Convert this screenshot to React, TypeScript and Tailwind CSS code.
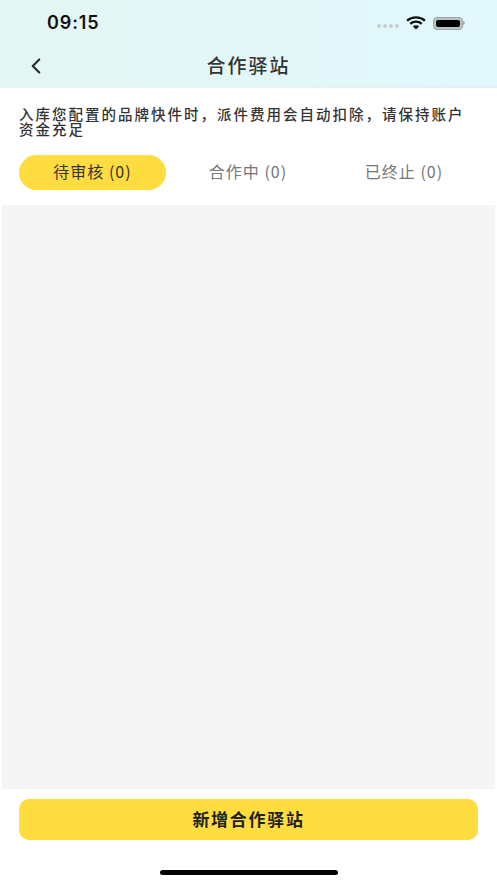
import React from 'react';
import { ChevronLeft } from 'lucide-react';

const cjk = { fontFamily: '"Noto Sans CJK SC", "Liberation Sans", sans-serif' };

function StatusIcons() {
  return (
    <div className="flex items-center">
      <div className="flex gap-[2px] mr-[7px] mt-[6px]">
        <span className="w-[4px] h-[4px] rounded-full bg-[#c4ced0]" />
        <span className="w-[4px] h-[4px] rounded-full bg-[#c4ced0]" />
        <span className="w-[4px] h-[4px] rounded-full bg-[#c4ced0]" />
        <span className="w-[4px] h-[4px] rounded-full bg-[#c4ced0]" />
      </div>
      <svg width="20" height="14" viewBox="0 0 20 14" className="mr-[7px]">
        <path d="M1 4.6C6 .2 14 .2 19 4.6" fill="none" stroke="#111" strokeWidth="2.2" />
        <path d="M4.2 7.8c3.3-2.8 8.3-2.8 11.6 0" fill="none" stroke="#111" strokeWidth="2.2" />
        <path d="M6.8 10.2c1.9-1.4 4.5-1.4 6.4 0L10 13.6z" fill="#111" />
      </svg>
      <div className="flex items-center">
        <div className="w-[30px] h-[13px] rounded-[4px] border border-[#9aa5a6] bg-[#b9c4c5] p-[2px]">
          <div className="w-full h-full rounded-[2px] bg-black" />
        </div>
        <span className="w-[2px] h-[4px] rounded-r-full bg-[#a5b0b1]" />
      </div>
    </div>
  );
}

export default function App() {
  return (
    <div className="w-[497px] h-[883px] bg-white flex flex-col overflow-hidden" style={cjk}>
      <div className="h-[88px] shrink-0 bg-gradient-to-r from-[#e4f6f3] to-[#e2f8fd] border-b border-[#e8f0ef]">
        <div className="h-[46px] pl-[47px] pr-[32px] pt-[12px] flex items-start justify-between">
          <span className="text-[18px] leading-[22px] font-semibold tracking-[0.9px] text-[#111]" style={{ fontFamily: 'Inter, sans-serif' }}>09:15</span>
          <div className="h-[22px] flex items-center"><StatusIcons /></div>
        </div>
        <div className="relative h-[41px] flex items-center justify-center">
          <ChevronLeft size={26} strokeWidth={2} className="absolute left-[23px] top-[7px] text-[#2b2b2b]" />
          <span className="text-[19px] leading-[26px] font-medium tracking-[2px] text-[#333] -mt-[4px]">合作驿站</span>
        </div>
      </div>

      <p className="pl-[19px] pr-[20px] pt-[18px] text-[14.5px] leading-[15px] tracking-[2px] font-medium text-[#333]">
        入库您配置的品牌快件时，派件费用会自动扣除，请保持账户资金充足
      </p>

      <div className="flex items-center pl-[19px] pr-[19px] mt-[19px] h-[35px] shrink-0">
        <div className="w-[147px] h-[35px] rounded-full bg-[#ffdc40] flex items-center justify-center pb-[3px] text-[16px] tracking-[1px] text-[#333]">待审核 (0)</div>
        <div className="w-[164px] flex justify-center pb-[3px] text-[16px] tracking-[1px] text-[#777]">合作中 (0)</div>
        <div className="w-[148px] flex justify-center pb-[3px] text-[16px] tracking-[1px] text-[#777]">已终止 (0)</div>
      </div>

      <div className="mx-[2px] mt-[15px] h-[584px] shrink-0 bg-[#f5f5f5]" />

      <div className="px-[19px] pt-[10px]">
        <button className="w-full h-[41px] rounded-[10px] bg-[#ffdc40] pb-[2px] text-[17px] tracking-[1.7px] font-bold text-[#222]">新增合作驿站</button>
      </div>

      <div className="mt-[30px] mx-auto w-[178px] h-[5px] rounded-full bg-black" />
    </div>
  );
}
